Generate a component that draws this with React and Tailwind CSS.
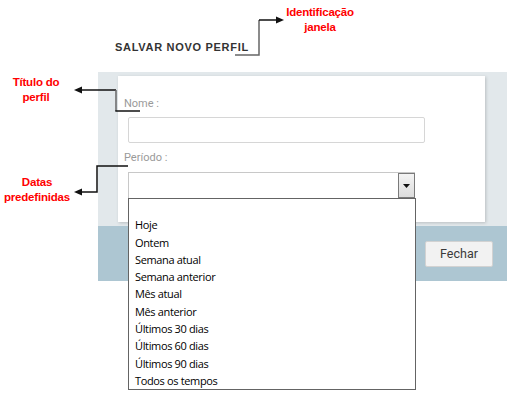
import React from "react";

const periods = [
  "",
  "Hoje",
  "Ontem",
  "Semana atual",
  "Semana anterior",
  "Mês atual",
  "Mês anterior",
  "Últimos 30 dias",
  "Últimos 60 dias",
  "Últimos 90 dias",
  "Todos os tempos",
];

const redLabel =
  "absolute text-center text-[11.5px] leading-[15px] font-bold text-[#ff0000] tracking-[-0.2px] font-['Liberation_Sans',Arial,sans-serif]";

const Annotations = () => (
  <>
    <svg className="absolute inset-0 pointer-events-none" width="507" height="394">
      {/* identificação janela */}
      <polyline points="235,55 259,55 259,20" fill="none" stroke="#666" strokeWidth="1.5" />
      <line x1="259" y1="20" x2="278" y2="20" stroke="#111" strokeWidth="1.5" />
      <polygon points="284,20 276,16.5 276,23.5" fill="#111" />
      {/* título do perfil */}
      <line x1="80" y1="90" x2="116" y2="90" stroke="#111" strokeWidth="1.5" />
      <polygon points="74,90 82,86.5 82,93.5" fill="#111" />
      <line x1="116" y1="90" x2="116" y2="111" stroke="#666" strokeWidth="1.5" />
      <line x1="115.3" y1="111" x2="140" y2="111" stroke="#111" strokeWidth="1.5" />
      {/* datas predefinidas */}
      <polyline points="128,166 97,166 97,192 80,192" fill="none" stroke="#111" strokeWidth="1.5" />
      <polygon points="74,192 82,188.5 82,195.5" fill="#111" />
    </svg>
    <div className={`${redLabel} left-[280px] top-[5px] w-[80px]`}>
      Identificação
      <br />
      janela
    </div>
    <div className={`${redLabel} left-[6px] top-[75px] w-[60px]`}>
      Título do
      <br />
      perfil
    </div>
    <div className={`${redLabel} left-[1px] top-[175px] w-[72px]`}>
      Datas
      <br />
      predefinidas
    </div>
  </>
);

export default function App() {
  return (
    <div className="relative w-[507px] h-[394px] bg-white overflow-hidden">
      <h1 className="h-[72px] pt-[40px] pl-[115px] text-[11px] leading-[14px] font-bold tracking-[0.7px] text-[#333] font-['Liberation_Sans',Arial,sans-serif]">
        SALVAR NOVO PERFIL
      </h1>

      <div className="ml-[98px]">
        <div className="bg-[#e2e8eb] pt-[4px] pb-[4px] pl-[20px] pr-[22px]">
          <div className="h-[146px] bg-white pl-[6px] pt-[21px] shadow-[1px_1px_3px_rgba(0,0,0,0.18)] font-['Roboto',sans-serif]">
            <label className="block text-[11px] leading-[14px] text-[#9a9a9a]">Nome :</label>
            <input
              type="text"
              className="block mt-[6px] ml-[4px] w-[297px] h-[26px] border border-[#d6d6d6] rounded-[2px] bg-white outline-none"
            />
            <label className="block mt-[8px] text-[11px] leading-[14px] text-[#9a9a9a]">Período :</label>
            <div className="relative mt-[7px] ml-[4px] w-[287px] h-[26px] flex border border-[#c8c8c8] border-r-0 border-b-0 bg-white">
              <div className="flex-1" />
              <div className="w-[17px] h-full flex items-center justify-center border border-[#7a7a7a] bg-gradient-to-b from-[#f4f4f4] to-[#dcdcdc]">
                <svg width="7" height="4" viewBox="0 0 7 4">
                  <polygon points="0,0 7,0 3.5,4" fill="#111" />
                </svg>
              </div>
              <ul className="absolute left-[-1px] top-full w-[288px] bg-white border border-[#646464] z-10 font-['Open_Sans',sans-serif] text-[11px] tracking-[-0.35px] text-black">
                {periods.map((p, i) => (
                  <li key={i} className="h-[17.3px] leading-[17.3px] pl-[6px]">
                    {p}
                  </li>
                ))}
              </ul>
            </div>
          </div>
        </div>
        <div className="h-[55px] bg-[#adc6d2] flex justify-end items-start pt-[15px] pr-[14px]">
          <button className="w-[68px] h-[26px] rounded-[2px] border border-[#d2d2d2] bg-[#f2f2f2] text-[12.5px] text-[#3a3a3a] font-['Roboto',sans-serif]">
            Fechar
          </button>
        </div>
      </div>

      <Annotations />
    </div>
  );
}
